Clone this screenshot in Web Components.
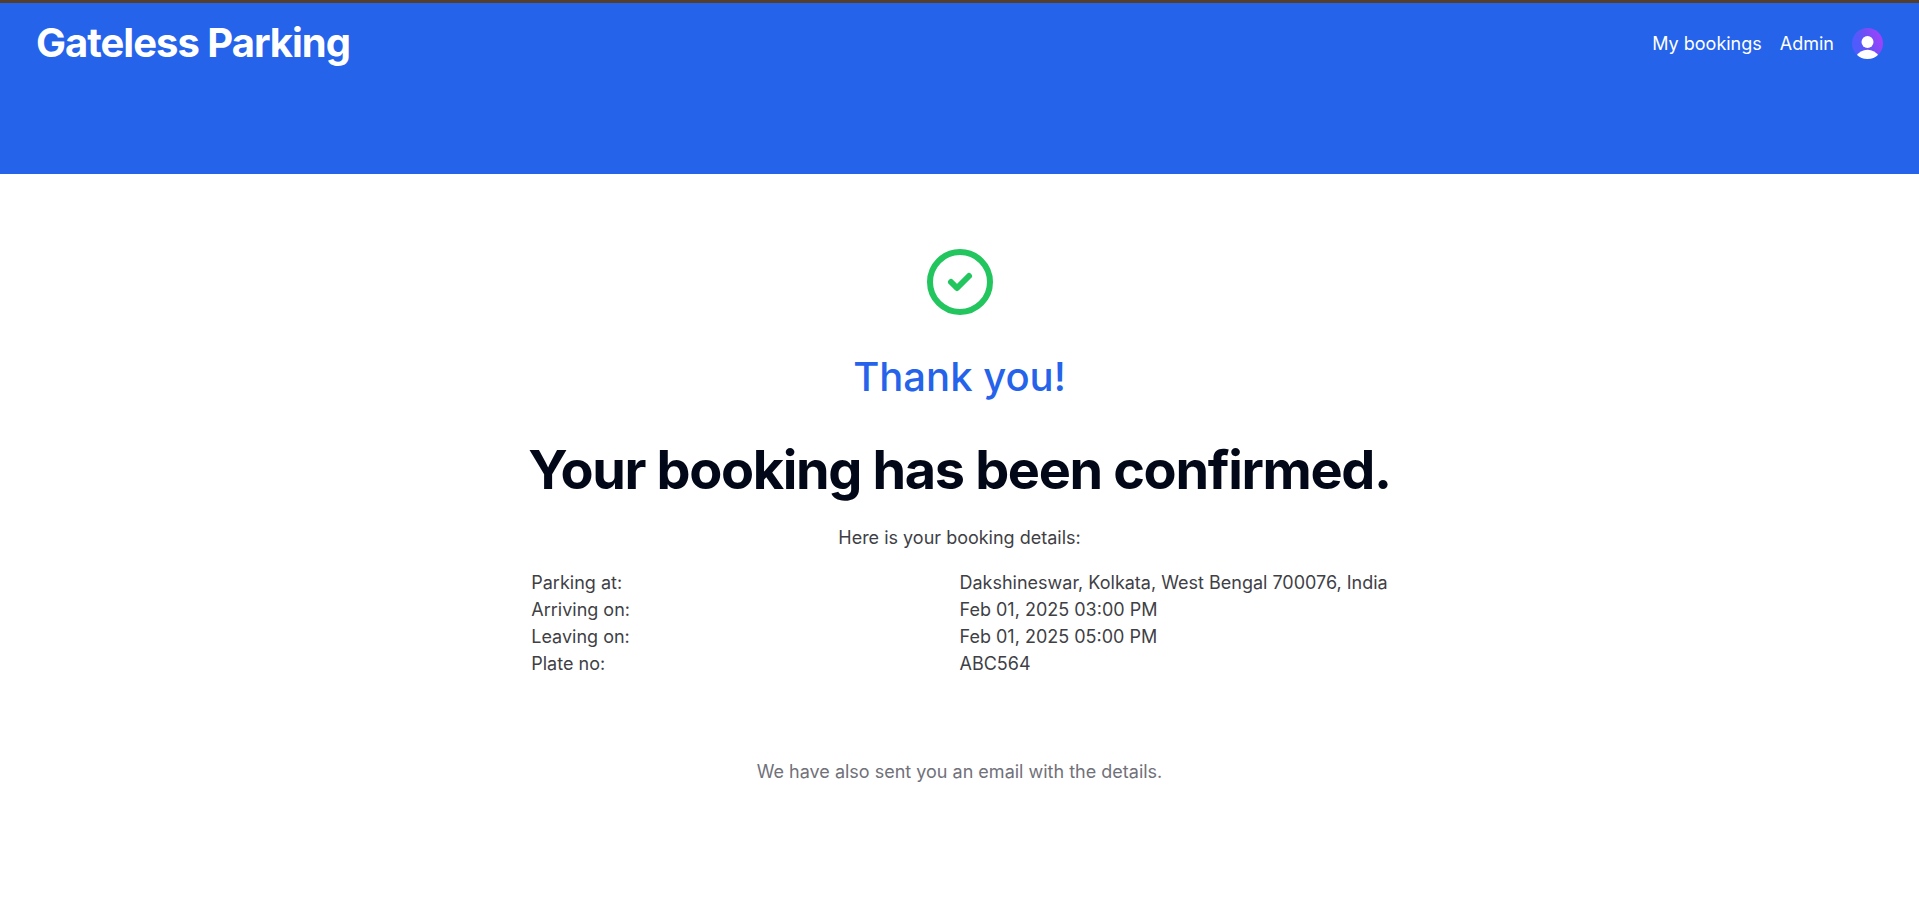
<!DOCTYPE html>
<html lang="en">
<head>
<meta charset="utf-8">
<title>Gateless Parking</title>
<style>
body { margin: 0; background: #fff; color: #020817; font-family: Inter, sans-serif; font-size: 18px; line-height: 27px; }
</style>
</head>
<body>
<parking-page></parking-page>
<script>
const define = (name, html) => {
  const t = document.createElement('template');
  t.innerHTML = html;
  customElements.define(name, class extends HTMLElement {
    constructor() {
      super();
      this.attachShadow({ mode: 'open' }).append(t.content.cloneNode(true));
    }
  });
};

define('user-avatar', `
<style>
:host { display: block; }
button { display: block; border: 0; padding: 0; background: none; border-radius: 50%; cursor: pointer; }
svg { display: block; width: 31px; height: 31px; }
</style>
<button type="button" aria-label="Open user menu">
<svg viewBox="0 0 32 32" aria-hidden="true">
<defs>
<linearGradient id="g" x1="0.1" y1="0.6" x2="0.9" y2="0.3"><stop offset="0.1" stop-color="#4f5bfc"/><stop offset="0.5" stop-color="#6c50f5"/><stop offset="1" stop-color="#9a43fb"/></linearGradient>
<clipPath id="c"><circle cx="16" cy="16" r="16"/></clipPath>
</defs>
<g clip-path="url(#c)"><rect width="32" height="32" fill="url(#g)"/>
<circle cx="16" cy="14.5" r="6.2" fill="#fff"/><path d="M4 29c3-4 7-6.500 12-6.500s9 2.500 12 6.500v4H4z" fill="#fff"/></g>
</svg>
</button>`);

define('site-header', `
<style>
:host { display: block; background: #2563eb; border-top: 3px solid #543f2d; color: #fff; }
header { display: flex; justify-content: space-between; align-items: center; padding: 16px 36px; }
.band { height: 91px; }
a { color: inherit; text-decoration: none; }
.brand { font-size: 40px; line-height: 48px; font-weight: 700; letter-spacing: -0.025em; }
nav { display: flex; align-items: center; gap: 18px; }
</style>
<header>
<a class="brand" href="#">Gateless Parking</a>
<nav><a href="#">My bookings</a><a href="#">Admin</a><user-avatar></user-avatar></nav>
</header>
<div class="band"></div>`);

define('check-badge', `
<style>:host { display: block; } svg { display: block; width: 72px; height: 72px; }</style>
<svg viewBox="0 0 24 24" fill="none" stroke="#22c55e" stroke-width="2" stroke-linecap="round" stroke-linejoin="round" aria-hidden="true"><circle cx="12" cy="12" r="10"/><path d="m9 12 2 2 4-4"/></svg>`);

define('booking-details', `
<style>
:host { display: block; }
dl { display: grid; grid-template-columns: 1fr 1fr; margin: 0; }
dd { margin: 0; white-space: nowrap; }
</style>
<dl>
<dt>Parking at:</dt><dd>Dakshineswar, Kolkata, West Bengal 700076, India</dd>
<dt>Arriving on:</dt><dd>Feb 01, 2025 03:00 PM</dd>
<dt>Leaving on:</dt><dd>Feb 01, 2025 05:00 PM</dd>
<dt>Plate no:</dt><dd>ABC564</dd>
</dl>`);

define('booking-confirmation', `
<style>
:host { display: block; }
main { display: flex; flex-direction: column; align-items: center; padding: 72px 36px; color: #3f3f46; }
h1, p { margin: 0; }
.thanks { margin-top: 36px; font-size: 40px; line-height: 45px; font-weight: 500; color: #2563eb; }
h1 { margin-top: 39px; font-size: 54px; line-height: 64px; font-weight: 700; letter-spacing: -0.025em; color: #020817; }
.intro { margin-top: 22px; }
booking-details { margin-top: 18px; }
.mail { margin-top: 81px; color: #71717a; }
</style>
<main>
<check-badge></check-badge>
<p class="thanks">Thank you!</p>
<h1>Your booking has been confirmed.</h1>
<p class="intro">Here is your booking details:</p>
<booking-details></booking-details>
<p class="mail">We have also sent you an email with the details.</p>
</main>`);

define('parking-page', `
<style>:host { display: block; }</style>
<site-header></site-header>
<booking-confirmation></booking-confirmation>`);
</script>
</body>
</html>
